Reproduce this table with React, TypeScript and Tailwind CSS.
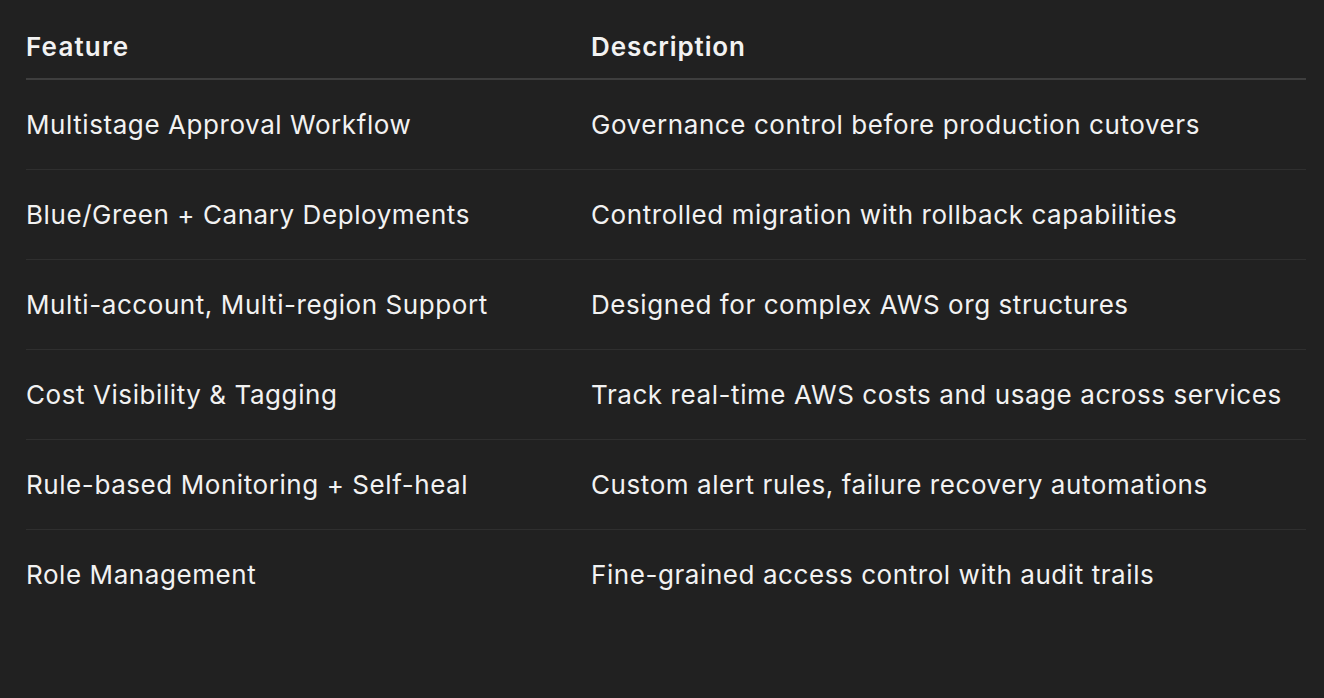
const rows = [
  ["Multistage Approval Workflow", "Governance control before production cutovers"],
  ["Blue/Green + Canary Deployments", "Controlled migration with rollback capabilities"],
  ["Multi-account, Multi-region Support", "Designed for complex AWS org structures"],
  ["Cost Visibility & Tagging", "Track real-time AWS costs and usage across services"],
  ["Rule-based Monitoring + Self-heal", "Custom alert rules, failure recovery automations"],
  ["Role Management", "Fine-grained access control with audit trails"],
];

export default function App() {
  return (
    <main className="min-h-screen w-full bg-[#212121] text-[#f2f2f2] pl-[26px] pr-[18px] pt-[31px] font-['Inter',sans-serif] text-[26px] tracking-[0.022em]">
      <table className="w-full border-collapse text-left">
        <thead>
          <tr className="border-b-2 border-[#3e3e3e]">
            <th className="w-[565px] pb-[15px] font-semibold leading-[32px] tracking-[0.045em]">Feature</th>
            <th className="pb-[15px] font-semibold leading-[32px] tracking-[0.035em]">Description</th>
          </tr>
        </thead>
        <tbody>
          {rows.map(([f, d], i) => (
            <tr key={f} className={i < rows.length - 1 ? "border-b border-[#2f2f2f]" : ""}>
              <td className="h-[90px] pt-[1px] leading-[32px] align-middle">{f}</td>
              <td className="h-[90px] pt-[1px] leading-[32px] align-middle">{d}</td>
            </tr>
          ))}
        </tbody>
      </table>
    </main>
  );
}
